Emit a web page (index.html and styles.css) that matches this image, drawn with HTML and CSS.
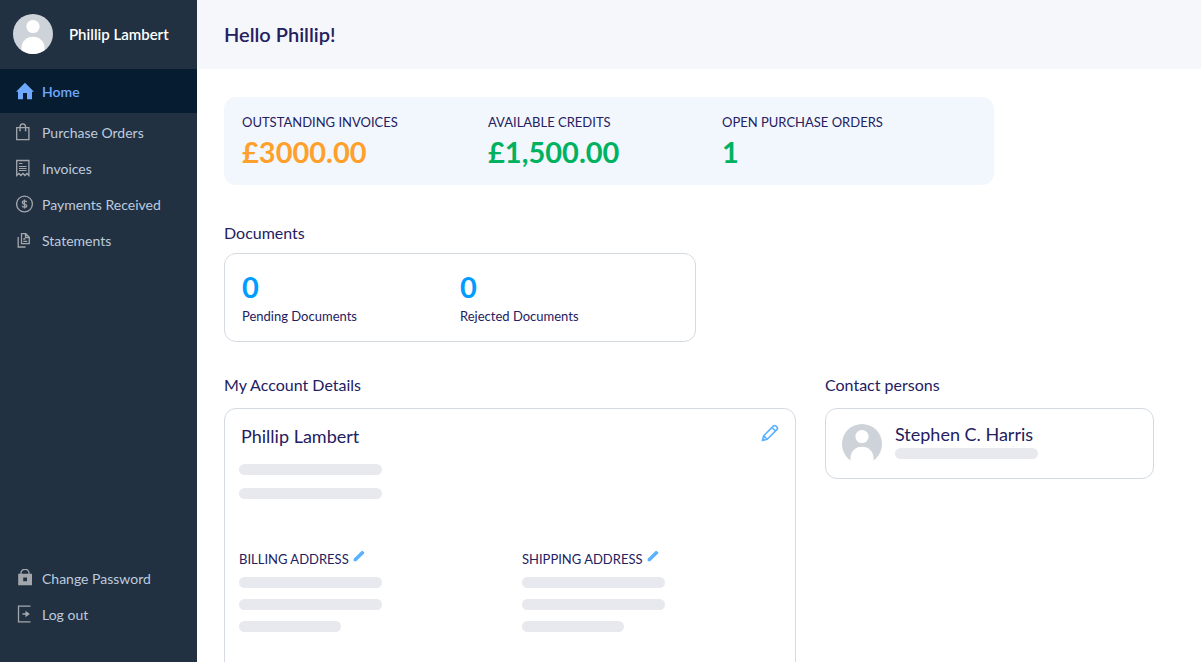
FILE: index.html
```html
<!DOCTYPE html>
<html lang="en">
<head>
    <meta charset="UTF-8">
    <meta name="viewport" content="width=device-width, initial-scale=1.0">
    <title>Home</title>
    <link rel="stylesheet" href="styles.css">
</head>

<body>
    <aside class="sidebar">
        <div class="user">
            <svg class="avatar" viewBox="0 0 40 40" aria-hidden="true">
                <circle cx="20" cy="20" r="20" fill="#ced3d9"/>
                <circle cx="20" cy="12.500" r="6.600" fill="#fff"/>
                <path d="M8.500 36.300V34C8.500 27.500 13.500 22.800 20 22.800S31.500 27.500 31.500 34V36.300A20 20 0 0 1 8.500 36.300Z" fill="#fff"/>
            </svg>
            <span class="user-name">Phillip Lambert</span>
        </div>
        <nav class="menu">
            <a class="menu-link active" href="#">
                <svg class="icon" viewBox="0 0 18 18"><path d="M9 .8 0 9.800h2V17.200h5V11h4v6.200h5V9.800h2Z" fill="#6ea8ff" stroke="none"/></svg>
                Home
            </a>
            <a class="menu-link" href="#">
                <svg class="icon" viewBox="0 0 18 18"><path d="M.7 4.700h12.200v12H.7ZM4 8V4a2.800 3.200 0 0 1 5.600 0V8M3.200 7.700h1.600M8.800 7.700h1.600"/></svg>
                Purchase Orders
            </a>
            <a class="menu-link" href="#">
                <svg class="icon" viewBox="0 0 18 18"><path d="M.7 16.500V1.500h12.200v15l-2-2-2 2-2-2-2 2-2-2Z"/><path d="M3 4.500h3.500M3 7.500h7.500M3 9.500h7.500M3 11.500h7.500" stroke-width="1"/></svg>
                Invoices
            </a>
            <a class="menu-link" href="#">
                <svg class="icon" viewBox="0 0 18 18"><circle cx="8.500" cy="9" r="7.900"/><path d="M10.700 7.200C10.600 6.200 9.700 5.800 8.500 5.800S6.400 6.400 6.400 7.400c0 2.300 4.300 1 4.300 3.300 0 1-.9 1.600-2.200 1.600s-2.200-.5-2.300-1.500M8.500 4.600v8.900"/></svg>
                Payments Received
            </a>
            <a class="menu-link" href="#">
                <svg class="icon" viewBox="0 0 18 18"><path d="M5.500 2.700h4.300l3.500 3.500v6.500H5.500ZM9.500 2.700v3.800h3.800M7.300 8h2M7.300 10.300h4M2.200 6v10h7.300"/></svg>
                Statements
            </a>
        </nav>
        <nav class="menu menu-bottom">
            <a class="menu-link" href="#">
                <svg class="icon" viewBox="0 0 18 18"><path d="M5 6V3.900a4 3.600 0 0 1 8 0V6"/><path d="M2.200 4.800h13.800v11.500H2.200ZM7.200 8.500v3.800h3.800V8.500Z" fill="#a3a7ac" fill-rule="evenodd" stroke="none"/></svg>
                Change Password
            </a>
            <a class="menu-link" href="#">
                <svg class="icon" viewBox="0 0 18 18"><path d="M14.500 1.200h-12v15.600h12M6.500 9h4"/><path d="M9.500 5.800 13.800 9 9.500 12.200Z" fill="#a3a7ac" stroke="none"/></svg>
                Log out
            </a>
        </nav>
    </aside>

    <main class="main">
        <header class="topbar">
            <h1>Hello Phillip!</h1>
        </header>

        <div class="content">
            <section class="summary">
                <div>
                    <div class="label">OUTSTANDING INVOICES</div>
                    <div class="value orange">£3000.00</div>
                </div>
                <div>
                    <div class="label">AVAILABLE CREDITS</div>
                    <div class="value green">£1,500.00</div>
                </div>
                <div>
                    <div class="label">OPEN PURCHASE ORDERS</div>
                    <div class="value green">1</div>
                </div>
            </section>

            <section class="documents">
                <h2>Documents</h2>
                <div class="card documents-card">
                    <div>
                        <div class="value blue">0</div>
                        <div class="label">Pending Documents</div>
                    </div>
                    <div>
                        <div class="value blue">0</div>
                        <div class="label">Rejected Documents</div>
                    </div>
                </div>
            </section>

            <div class="details">
                <section class="account">
                    <h2>My Account Details</h2>
                    <div class="card account-card">
                        <div class="account-head">
                            <h3>Phillip Lambert</h3>
                            <button class="edit" aria-label="Edit account">
                                <svg width="18" height="18" viewBox="0 0 18 18"><path d="M1.500 16.500 2.700 11.800 12.600 1.900a1.400 1.400 0 0 1 2 0l1.500 1.500a1.400 1.400 0 0 1 0 2L6.200 15.300ZM11 3.500l3.500 3.500M2.700 11.800l3.500 3.500" fill="none" stroke="#5ab1ff" stroke-width="1.600" stroke-linejoin="round"/><path d="M1.200 16.800l.8-3 2.200 2.200Z" fill="#5ab1ff"/></svg>
                            </button>
                        </div>
                        <div class="lines lines-wide">
                            <div class="line"></div>
                            <div class="line"></div>
                        </div>
                        <div class="addresses">
                            <div>
                                <div class="address-head">
                                    <h4 class="label">BILLING ADDRESS</h4>
                                    <button class="edit" aria-label="Edit billing address">
                                        <svg width="12" height="12" viewBox="0 0 12 12"><path d="M.7 11.300V8.800L8.600.9a.8.800 0 0 1 1.100 0l1.400 1.400a.8.800 0 0 1 0 1.100L3.200 11.300Z" fill="#5ab1ff"/></svg>
                                    </button>
                                </div>
                                <div class="lines">
                                    <div class="line"></div>
                                    <div class="line"></div>
                                    <div class="line short"></div>
                                </div>
                            </div>
                            <div>
                                <div class="address-head">
                                    <h4 class="label">SHIPPING ADDRESS</h4>
                                    <button class="edit" aria-label="Edit shipping address">
                                        <svg width="12" height="12" viewBox="0 0 12 12"><path d="M.7 11.300V8.800L8.600.9a.8.800 0 0 1 1.100 0l1.400 1.400a.8.800 0 0 1 0 1.100L3.200 11.300Z" fill="#5ab1ff"/></svg>
                                    </button>
                                </div>
                                <div class="lines">
                                    <div class="line"></div>
                                    <div class="line"></div>
                                    <div class="line short"></div>
                                </div>
                            </div>
                        </div>
                    </div>
                </section>

                <section class="contacts">
                    <h2>Contact persons</h2>
                    <div class="card contact-card">
                        <svg class="avatar" viewBox="0 0 40 40" aria-hidden="true">
                            <circle cx="20" cy="20" r="20" fill="#ced3d9"/>
                            <circle cx="20" cy="12.500" r="6.600" fill="#fff"/>
                            <path d="M8.500 40V34C8.500 27.500 13.500 22.800 20 22.800S31.500 27.500 31.500 34V40Z" fill="#fff"/>
                        </svg>
                        <div>
                            <h3>Stephen C. Harris</h3>
                            <div class="line"></div>
                        </div>
                    </div>
                </section>
            </div>
        </div>
    </main>
</body>
</html>
```
FILE: styles.css
```css
* {
    box-sizing: border-box;
}
body {
    margin: 0;
    height: 100vh;
    display: grid;
    grid-template-columns: 197px 1fr;
    font-family: Lato, sans-serif;
    color: #24205f;
    background: #fff;
}
h1, h2, h3, h4 {
    margin: 0;
    font-weight: 400;
}

/* Sidebar */
.sidebar {
    display: flex;
    flex-direction: column;
    height: 100vh;
    background: #223142;
}
.user {
    display: flex;
    align-items: center;
    gap: 16px;
    height: 69px;
    padding: 0 13px 2px;
}
.user-name {
    color: #fff;
    font-size: 15px;
    font-weight: 600;
}
.avatar {
    flex: none;
    width: 40px;
    height: 40px;
}
.menu-link {
    display: flex;
    align-items: center;
    gap: 8px;
    height: 36px;
    padding: 0 16px;
    color: #bccbde;
    font-size: 14px;
    text-decoration: none;
    white-space: nowrap;
}
.menu-link.active {
    height: 44px;
    margin-bottom: 1px;
    color: #6ea8ff;
    font-weight: 600;
    background: #061d31;
}
.menu-bottom {
    margin-top: auto;
    padding-bottom: 30px;
}
.icon {
    width: 18px;
    height: 18px;
    fill: none;
    stroke: #a3a7ac;
    stroke-width: 1.3;
}

/* Main */
.main {
    height: 100vh;
    overflow-y: auto;
    scrollbar-width: none;
}
.topbar {
    display: flex;
    align-items: center;
    height: 69px;
    padding: 0 27px 2px;
    background: #f5f7fb;
}
.topbar h1 {
    font-size: 20px;
    font-weight: 600;
}
.content {
    padding: 28px 47px 28px 27px;
}
h2 {
    font-size: 16px;
    line-height: 24px;
}
h3 {
    font-size: 18px;
    line-height: 24px;
}
.label {
    font-size: 13px;
    line-height: 18px;
}
.value {
    font-size: 29px;
    font-weight: 700;
    line-height: 36px;
}
.orange {
    color: #ffa02b;
}
.green {
    color: #00b260;
}
.blue {
    color: #009dff;
}
.card {
    border: 1px solid #d5dae1;
    border-radius: 12px;
}

.summary {
    display: grid;
    grid-template-columns: 246fr 234fr 254fr;
    max-width: 770px;
    padding: 16px 18px 15px;
    border-radius: 12px;
    background: #f2f7fe;
}
.summary .value {
    margin-top: 3px;
}

.documents {
    max-width: 472px;
    margin-top: 36px;
}
.documents-card {
    display: grid;
    grid-template-columns: 1fr 1fr;
    margin-top: 8px;
    padding: 15px 17px 16px;
}
.documents-card .label {
    margin-top: 2px;
}

.details {
    display: grid;
    grid-template-columns: 572fr 329fr;
    gap: 29px;
    margin-top: 31px;
}
.details .card {
    margin-top: 11px;
}
.account-card {
    padding: 15px 14px 60px;
}
.account-head {
    display: flex;
    justify-content: space-between;
    padding: 0 2px;
}
.edit {
    display: flex;
    height: 18px;
    padding: 0;
    border: none;
    background: none;
    cursor: pointer;
}
.line {
    width: 143px;
    height: 11px;
    border-radius: 6px;
    background: #e8e8ef;
}
.line.short {
    width: 102px;
}
.lines {
    display: grid;
    gap: 11px;
    margin-top: 9px;
}
.lines-wide {
    gap: 13px;
    margin-top: 16px;
}
.addresses {
    display: grid;
    grid-template-columns: 283fr 259fr;
    margin-top: 51px;
}
.address-head {
    display: flex;
    gap: 4px;
}
.contact-card {
    display: flex;
    align-items: flex-start;
    gap: 13px;
    padding: 13px 16px 14px;
}
.contact-card .avatar {
    margin-top: 2px;
}
.contact-card .line {
    margin-top: 2px;
}
```
